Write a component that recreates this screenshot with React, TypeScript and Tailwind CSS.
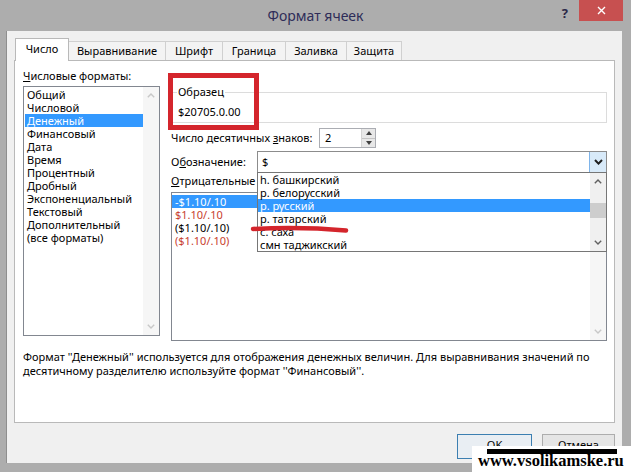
import React from "react";

function ChevUp({ color }: { color: string }) {
  return (
    <svg width="8" height="5" viewBox="0 0 8 5">
      <path d="M0.8 4.3 L4 1.1 L7.2 4.3" fill="none" stroke={color} strokeWidth="1.4" />
    </svg>
  );
}

function ChevDown({ color }: { color: string }) {
  return (
    <svg width="8" height="5" viewBox="0 0 8 5">
      <path d="M0.8 0.7 L4 3.9 L7.2 0.7" fill="none" stroke={color} strokeWidth="1.4" />
    </svg>
  );
}

const formats = [
  "Общий",
  "Числовой",
  "Денежный",
  "Финансовый",
  "Дата",
  "Время",
  "Процентный",
  "Дробный",
  "Экспоненциальный",
  "Текстовый",
  "Дополнительный",
  "(все форматы)",
];

const symbols = [
  "һ. башкирский",
  "р. белорусский",
  "р. русский",
  "р. татарский",
  "с. саха",
  "смн таджикский",
];

export default function App() {
  return (
    <div className="w-[631px] h-[472px] bg-[#adadad] flex flex-col overflow-hidden relative font-['Noto_Sans','Open_Sans',sans-serif] text-[11px] text-black">
      {/* Title bar */}
      <div className="h-[31px] shrink-0 grid grid-cols-[1fr_auto_1fr]">
        <div />
        <div className="pt-[6px] text-[14px] leading-[20px] text-[#2e2c58]">Формат ячеек</div>
        <div className="flex justify-end items-start pr-[8px]">
          <div className="mt-[5px] mr-[11px] text-[13px] leading-[16px] font-bold text-[#2a2846]">?</div>
          <div className="w-[44px] h-[21px] bg-[#c75050] flex items-center justify-center">
            <svg width="9" height="9" viewBox="0 0 9 9">
              <path d="M1 1 L8 8 M8 1 L1 8" stroke="#ffffff" strokeWidth="1.4" />
            </svg>
          </div>
        </div>
      </div>

      {/* Client area */}
      <div className="flex-1 ml-[6px] mr-[9px] mb-[9px] bg-[#f0f0f0] border-l border-[#8e8e8e] flex flex-col pl-[7px] pr-[7px] pt-[7px] pb-[3px]">
        {/* Tabs */}
        <div className="h-[22px] flex items-end pl-[1px] shrink-0">
          <div className="relative z-10 -mb-px h-[23px] w-[54px] bg-white border border-b-0 border-[#b9b9b9] flex items-center justify-center pb-[2px]">
            Число
          </div>
          <div className="h-[19px] w-[97px] bg-[#f3f3f3] border border-b-0 border-l-0 border-[#d0d0d0] flex items-center justify-center">
            Выравнивание
          </div>
          <div className="h-[19px] w-[57px] bg-[#f3f3f3] border border-b-0 border-l-0 border-[#d0d0d0] flex items-center justify-center">
            Шрифт
          </div>
          <div className="h-[19px] w-[63px] bg-[#f3f3f3] border border-b-0 border-l-0 border-[#d0d0d0] flex items-center justify-center">
            Граница
          </div>
          <div className="h-[19px] w-[61px] bg-[#f3f3f3] border border-b-0 border-l-0 border-[#d0d0d0] flex items-center justify-center">
            Заливка
          </div>
          <div className="h-[19px] w-[55px] bg-[#f3f3f3] border border-b-0 border-l-0 border-[#d0d0d0] flex items-center justify-center">
            Защита
          </div>
        </div>

        {/* Panel */}
        <div className="relative h-[363px] shrink-0 bg-white border border-[#b9b9b9] pl-[8px] pr-[7px]">
          <div className="flex">
            {/* Left column */}
            <div className="w-[137px] pt-[7px]">
              <div className="h-[16px] leading-[16px]">
                <span className="underline">Ч</span>исловые форматы:
              </div>
              <div className="mt-[2px] h-[250px] border border-[#828790] flex bg-white">
                <div className="flex-1 pt-[1px] pl-[1px]">
                  {formats.map((f, i) => (
                    <div
                      key={f}
                      className={
                        i === 2
                          ? "h-[13px] leading-[13px] px-[2px] bg-[#3399ff] text-white whitespace-nowrap"
                          : "h-[13px] leading-[13px] px-[2px] whitespace-nowrap"
                      }
                    >
                      {f}
                    </div>
                  ))}
                </div>
                <div className="w-[16px] bg-[#f6f6f6] flex flex-col justify-between">
                  <div className="h-[17px] flex items-center justify-center">
                    <ChevUp color="#c8c8c8" />
                  </div>
                  <div className="h-[17px] flex items-center justify-center">
                    <ChevDown color="#c8c8c8" />
                  </div>
                </div>
              </div>
            </div>

            {/* Right column */}
            <div className="flex-1 ml-[11px] pt-[23px]">
              <fieldset className="border border-[#dcdcdc] pl-[5px] pb-[2px]">
                <legend className="h-[16px] leading-[16px] px-[1px]">Образец</legend>
                <div className="mt-[4px] ml-[1px] h-[16px] leading-[16px]">$20705.0.00</div>
              </fieldset>

              <div className="mt-[5px] h-[20px] flex items-center">
                <div className="w-[148px]">
                  Число десятичных <span className="underline">з</span>наков:
                </div>
                <div className="w-[57px] h-[20px] border border-[#abadb3] flex bg-white">
                  <div className="flex-1 pl-[5px] leading-[18px]">2</div>
                  <div className="w-[14px] flex flex-col border-l border-[#d4d4d4]">
                    <div className="flex-1 bg-[#e8e8e8] border-b border-[#c4c4c4] flex items-center justify-center">
                      <svg width="6" height="4" viewBox="0 0 6 4">
                        <path d="M0 4 L3 0 L6 4 Z" fill="#404040" />
                      </svg>
                    </div>
                    <div className="flex-1 bg-[#e8e8e8] flex items-center justify-center">
                      <svg width="6" height="4" viewBox="0 0 6 4">
                        <path d="M0 0 L3 4 L6 0 Z" fill="#404040" />
                      </svg>
                    </div>
                  </div>
                </div>
              </div>

              <div className="mt-[3px] h-[22px] flex items-center">
                <div className="w-[86px]">
                  О<span className="underline">б</span>означение:
                </div>
                <div className="relative flex-1 h-[22px] border border-[#8c8c8c] bg-white flex">
                  <div className="flex-1 pl-[4px] leading-[20px]">$</div>
                  <div className="w-[17px] bg-[#d8eaf9] border-l border-[#7eb4ea] flex items-center justify-center">
                    <svg width="9" height="6" viewBox="0 0 9 6">
                      <path d="M1 1 L4.5 4.6 L8 1" fill="none" stroke="#1e1e1e" strokeWidth="2" />
                    </svg>
                  </div>

                  {/* Dropdown list */}
                  <div className="absolute z-20 left-[-1px] right-[-1px] top-[20px] h-[80px] bg-white border border-[#767676] flex">
                    <div className="flex-1">
                      {symbols.map((s, i) => (
                        <div
                          key={s}
                          className={
                            i === 2
                              ? "h-[13px] leading-[13px] px-[2px] bg-[#3399ff] text-white whitespace-nowrap"
                              : "h-[13px] leading-[13px] px-[2px] whitespace-nowrap"
                          }
                        >
                          {s}
                        </div>
                      ))}
                    </div>
                    <div className="w-[16px] bg-[#f0f0f0] flex flex-col">
                      <div className="h-[17px] flex items-center justify-center">
                        <ChevUp color="#606060" />
                      </div>
                      <div className="h-[13px]" />
                      <div className="h-[15px] bg-[#cdcdcd]" />
                      <div className="flex-1" />
                      <div className="h-[17px] flex items-center justify-center">
                        <ChevDown color="#606060" />
                      </div>
                    </div>
                  </div>
                </div>
              </div>

              <div className="h-[16px] leading-[16px]">
                <span className="underline">О</span>трицательные числа:
              </div>

              <div className="mt-[3px] h-[149px] border border-[#828790] flex bg-white">
                <div className="flex-1 pt-[2px]">
                  <div className="h-[13px] leading-[13px] px-[3px] bg-[#3399ff] text-white">-$1.10/.10</div>
                  <div className="h-[13px] leading-[13px] px-[3px] text-[#c8412f]">$1.10/.10</div>
                  <div className="h-[13px] leading-[13px] px-[3px]">($1.10/.10)</div>
                  <div className="h-[13px] leading-[13px] px-[3px] text-[#c8412f]">($1.10/.10)</div>
                </div>
                <div className="w-[16px] bg-[#f6f6f6] flex flex-col justify-end">
                  <div className="h-[17px] flex items-center justify-center">
                    <ChevDown color="#c8c8c8" />
                  </div>
                </div>
              </div>
            </div>
          </div>

          <div className="mt-[9px] leading-[14px] whitespace-nowrap">
            Формат ''Денежный'' используется для отображения денежных величин. Для выравнивания значений по
            <br />
            десятичному разделителю используйте формат ''Финансовый''.
          </div>

          {/* Red annotation rectangle */}
          <div className="absolute left-[153px] top-[12px] w-[91px] h-[57px] border-[5px] border-[#d4252c] pointer-events-none" />
          {/* Red annotation underline */}
          <svg className="absolute left-[235px] top-[161px] z-30" width="104" height="14" viewBox="250 222 104 14">
            <path d="M253 229 Q300 226.5 346 230.5" fill="none" stroke="#d4252c" strokeWidth="4.5" strokeLinecap="round" />
          </svg>
        </div>

        {/* Buttons */}
        <div className="mt-[11px] flex justify-end gap-[10px]">
          <div className="w-[75px] h-[25px] border border-[#3c7fb1] bg-[#e9eef3] flex items-center justify-center pb-[3px]">OK</div>
          <div className="w-[73px] h-[25px] border border-[#adadad] bg-[#e5e5e5] flex items-center justify-center pb-[3px]">Отмена</div>
        </div>
      </div>

      {/* Watermark */}
      <div className="absolute left-[472px] top-[446px] right-0 bottom-0 bg-white">
        <div className="absolute left-[15px] top-[3px] w-[130px] h-[5px] bg-black" />
        <div className="pl-[6px] pt-[7px] leading-[16px] text-[16.5px] font-bold font-['Liberation_Serif',serif] text-black whitespace-nowrap">
          www.vsolikamske.ru
        </div>
      </div>
    </div>
  );
}
